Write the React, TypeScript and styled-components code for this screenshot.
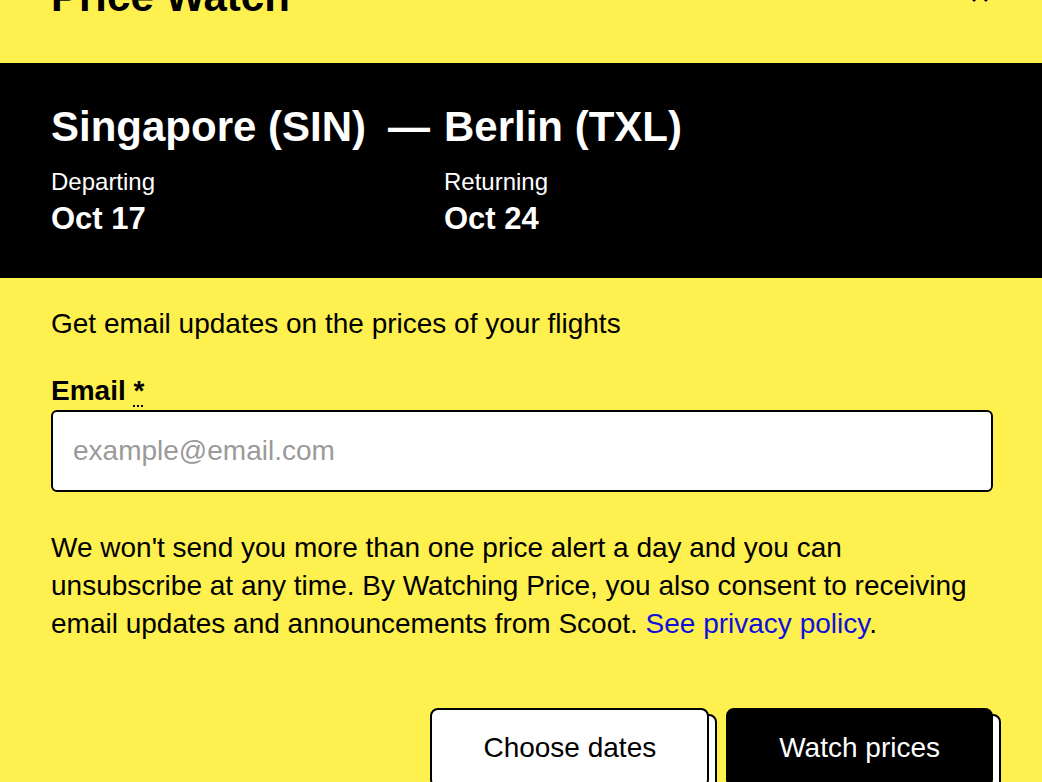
import styled, { createGlobalStyle } from 'styled-components';

// Global style
const GlobalStyle = createGlobalStyle`
  html, body {
    margin: 0;
    padding: 0;
    background: #fef04e;
    overflow: hidden;
  }
  body {
    font-family: 'Liberation Sans', Arial, Helvetica, sans-serif;
    color: #000;
  }
`;

// Styled element (Modal)
const StyledModal = styled.div`
  background: #fef04e;
  display: flex;
  flex-direction: column;
  min-height: 820px;
`;
// Styled element (Header)
const StyledHeader = styled.header`
  align-items: flex-start;
  display: flex;
  height: 90px;
  justify-content: space-between;
  margin-top: -27px;
  padding: 0 54px 0 51px;
`;
const StyledTitle = styled.h1`
  font-size: 42px;
  font-weight: 700;
  line-height: 48px;
  margin: 0;
`;
const StyledClose = styled.button`
  background: none;
  border: 0;
  cursor: pointer;
  display: flex;
  margin-top: 13px;
  padding: 0;
  svg {
    display: block;
  }
`;
// Styled element (Flight band)
const StyledBand = styled.section`
  background: #000;
  color: #fff;
  display: grid;
  grid-template-columns: 393px 1fr;
  padding: 39px 49px 41px 51px;
`;
const StyledRouteFrom = styled.div`
  display: flex;
  justify-content: space-between;
  padding-right: 14px;
`;
const StyledCity = styled.span`
  font-size: 42px;
  font-weight: 700;
  line-height: 50px;
  white-space: nowrap;
`;
const StyledDateLabel = styled.div`
  font-size: 24px;
  line-height: 30px;
  margin-top: 15px;
`;
const StyledDate = styled.div`
  font-size: 31px;
  font-weight: 700;
  line-height: 36px;
  margin-top: 4px;
`;
// Styled element (Body)
const StyledBody = styled.section`
  display: flex;
  flex-direction: column;
  padding: 29px 49px 0 51px;
`;
const StyledIntro = styled.p`
  font-size: 28px;
  line-height: 34px;
  margin: 0;
`;
const StyledLabel = styled.label`
  font-size: 28px;
  font-weight: 700;
  line-height: 34px;
  margin-top: 33px;
  abbr {
    cursor: help;
    text-decoration: underline dotted;
    text-decoration-thickness: 2px;
    text-underline-offset: 5px;
  }
`;
const StyledInput = styled.input`
  background: #fff;
  border: 2px solid #000;
  border-radius: 6px;
  box-sizing: border-box;
  font-family: inherit;
  font-size: 28px;
  height: 82px;
  margin-top: 2px;
  outline: none;
  padding: 0 20px;
  width: 100%;
  &::placeholder {
    color: #9a9a9a;
  }
`;
const StyledNote = styled.p`
  font-size: 28px;
  line-height: 38px;
  margin: 37px 0 0;
  max-width: 918px;
  a {
    color: #1010dc;
    text-decoration: none;
  }
`;
// Styled element (Actions)
const StyledActions = styled.div`
  display: flex;
  gap: 17px;
  isolation: isolate;
  justify-content: flex-end;
  margin-top: 65px;
`;
const StyledButton = styled.button<{ $primary?: boolean }>`
  background: ${({ $primary }) => ($primary ? '#000' : '#fff')};
  border: 2px solid #000;
  border-radius: 8px;
  color: ${({ $primary }) => ($primary ? '#fff' : '#000')};
  cursor: pointer;
  font-family: inherit;
  font-size: 28px;
  height: 80px;
  padding: 0 51px;
  position: relative;
  &::after {
    background: #fff;
    border: 2px solid #000;
    border-radius: 8px;
    content: '';
    inset: 4px -10px -6px 8px;
    position: absolute;
    z-index: -1;
  }
`;

// Component (flight summary)
const FlightBand = (): JSX.Element => {
  return (
    <StyledBand>
      <StyledRouteFrom>
        <StyledCity>Singapore (SIN)</StyledCity>
        <StyledCity>—</StyledCity>
      </StyledRouteFrom>
      <StyledCity>Berlin (TXL)</StyledCity>
      <div>
        <StyledDateLabel>Departing</StyledDateLabel>
        <StyledDate>Oct 17</StyledDate>
      </div>
      <div>
        <StyledDateLabel>Returning</StyledDateLabel>
        <StyledDate>Oct 24</StyledDate>
      </div>
    </StyledBand>
  );
};

// Component (app)
const App = (): JSX.Element => {
  return (
    <>
      <GlobalStyle />
      <StyledModal>
        <StyledHeader>
          <StyledTitle>Price Watch</StyledTitle>
          <StyledClose aria-label='Close'>
            <svg width='16' height='16' viewBox='0 0 16 16' fill='none' stroke='#000' strokeWidth='3' strokeLinecap='round'>
              <path d='M2 2 L14 14 M14 2 L2 14' />
            </svg>
          </StyledClose>
        </StyledHeader>
        <FlightBand />
        <StyledBody>
          <StyledIntro>Get email updates on the prices of your flights</StyledIntro>
          <StyledLabel htmlFor='pw-email'>
            Email <abbr title='required'>*</abbr>
          </StyledLabel>
          <StyledInput id='pw-email' type='email' placeholder='example@email.com' />
          <StyledNote>
            We won't send you more than one price alert a day and you can unsubscribe at any time. By Watching Price, you also consent to receiving email updates and announcements from Scoot. <a href='#privacy'>See privacy policy</a>.
          </StyledNote>
          <StyledActions>
            <StyledButton>Choose dates</StyledButton>
            <StyledButton $primary>Watch prices</StyledButton>
          </StyledActions>
        </StyledBody>
      </StyledModal>
    </>
  );
};

export default App;
